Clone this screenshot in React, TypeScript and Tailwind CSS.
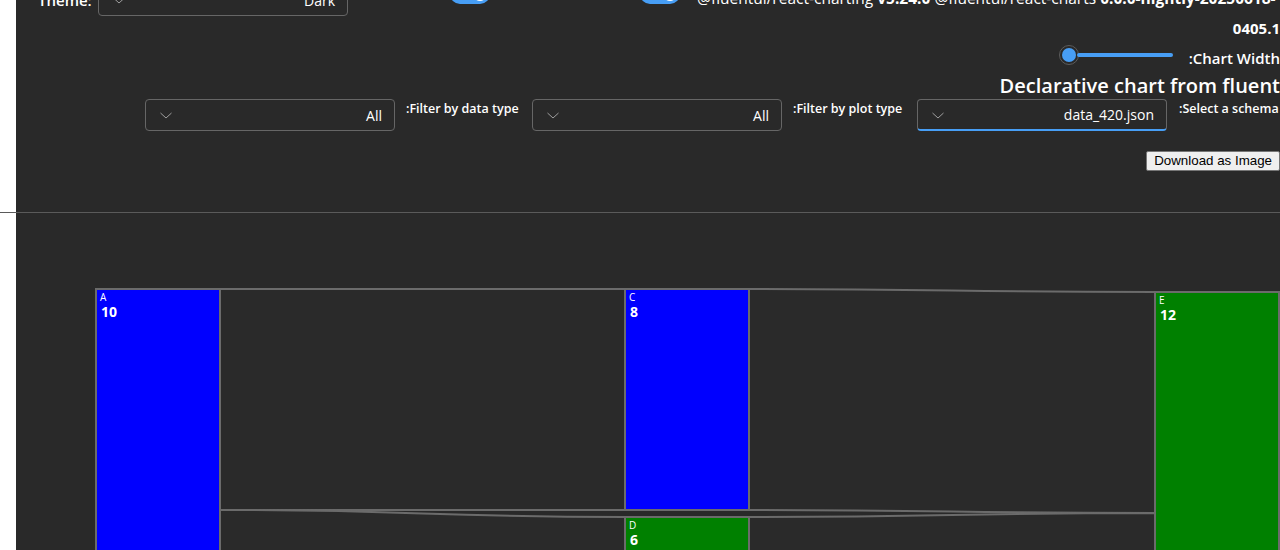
import React from "react";

const font = { fontFamily: '"Open Sans", "Noto Sans", sans-serif' };

function Chevron() {
  return (
    <svg width="14" height="14" viewBox="0 0 14 14" className="shrink-0">
      <path d="M1.5 5 L7 10 L12.5 5" fill="none" stroke="#9e9e9e" strokeWidth="1" />
    </svg>
  );
}

function Dropdown({ value, focused }: { value: string; focused?: boolean }) {
  return (
    <div
      className={
        "w-[250px] h-8 shrink-0 flex items-center justify-between rounded-[4px] border border-[#666666] bg-[#292929] pl-[13px] pr-[12px] " +
        (focused ? "border-b-2 border-b-[#479ef5]" : "")
      }
    >
      <Chevron />
      <span className="text-[14px] text-white">{value}</span>
    </div>
  );
}

function Switch() {
  return (
    <div className="w-10 h-5 rounded-full bg-[#479ef5] flex items-center justify-end pr-[3px] shrink-0">
      <div className="w-[14px] h-[14px] rounded-full bg-white" />
    </div>
  );
}

function linkPath(x0: number, t0: number, b0: number, x1: number, t1: number, b1: number) {
  const xm = (x0 + x1) / 2;
  return `M${x0},${t0} C${xm},${t0} ${xm},${t1} ${x1},${t1} L${x1},${b1} C${xm},${b1} ${xm},${b0} ${x0},${b0} Z`;
}

function Chart() {
  const nodes = [
    { x: 96, y: 289, h: 320, c: "#0000ff", l: "A", v: "10" },
    { x: 625, y: 289, h: 221, c: "#0000ff", l: "C", v: "8" },
    { x: 625, y: 517, h: 166, c: "#008000", l: "D", v: "6" },
    { x: 1155, y: 292, h: 331, c: "#008000", l: "E", v: "12" },
  ];
  const links = [
    linkPath(220, 289, 510, 625, 289, 510),
    linkPath(220, 510, 565, 625, 517, 572),
    linkPath(749, 289, 510, 1155, 292, 513),
    linkPath(749, 517, 627, 1155, 513, 623),
  ];
  return (
    <svg width="1264" height="337" className="block" style={font}>
      <g transform="translate(-16,-213)">
        {links.map((d, i) => (
          <path key={i} d={d} fill="#2a2a2a" stroke="#6b6b6b" strokeWidth="2" />
        ))}
        {nodes.map((n) => (
          <g key={n.l}>
            <rect x={n.x} y={n.y} width={124} height={n.h} fill={n.c} stroke="#6b6b6b" strokeWidth="2" />
            <text x={n.x + 4} y={n.y + 12} fontSize="10" fill="#ffffff">
              {n.l}
            </text>
            <text x={n.x + 5} y={n.y + 28} fontSize="14" fontWeight="700" fill="#ffffff">
              {n.v}
            </text>
          </g>
        ))}
      </g>
    </svg>
  );
}

export default function App() {
  return (
    <div className="w-[1280px] h-[550px] overflow-hidden bg-white flex flex-col text-white" style={font}>
      <div className="h-[212px] flex shrink-0">
        <div className="w-4 shrink-0 bg-white" />
        <div className="flex-1 bg-[#292929] flex flex-col min-w-0 overflow-hidden">
          {/* Row 1 */}
          <div className="-mt-4 h-8 flex items-center shrink-0">
            <span className="ml-[22px] w-[60px] shrink-0 text-[15px] font-semibold">Theme:</span>
            <Dropdown value="Dark" />
            <div className="ml-[102px] self-start">
              <Switch />
            </div>
            <div className="ml-[150px] self-start">
              <Switch />
            </div>
            <div className="ml-[17px] mt-[4px] self-start whitespace-nowrap text-[15.5px] font-semibold leading-[20px]">
              <span className="font-medium">@fluentui/react-charting</span> <span className="font-bold">v5.24.0</span>{" "}
              <span className="font-medium">@fluentui/react-charts</span>{" "}
              <span className="font-bold">0.0.0-nightly-20250618-</span>
            </div>
          </div>
          {/* Row 2 */}
          <div className="mt-[2px] h-5 text-right text-[15px] font-bold leading-[20px]">0405.1</div>
          {/* Row 3 slider */}
          <div className="mt-[9px] h-[22px] flex justify-end items-center">
            <div className="w-[114px] flex items-center -mt-[6px]">
              <div className="w-5 h-5 rounded-full border border-[#5c5c5c] bg-[#292929] flex items-center justify-center shrink-0">
                <div className="w-[14px] h-[14px] rounded-full bg-[#479ef5]" />
              </div>
              <div className="flex-1 h-1 rounded-full bg-[#479ef5] -ml-[2px]" />
            </div>
            <span className="ml-[16px] text-[15px] font-semibold whitespace-nowrap">:Chart Width</span>
          </div>
          {/* Row 4 heading */}
          <div className="mt-[5px] h-6 text-right text-[20px] font-semibold leading-[24px] whitespace-nowrap">
            Declarative chart from fluent
          </div>
          {/* Row 5 filters */}
          <div className="mt-[1px] flex items-start whitespace-nowrap">
            <div className="ml-[129px]">
              <Dropdown value="All" />
            </div>
            <span className="ml-[11px] mr-[11px] w-[115px] shrink-0 text-[12.5px] font-semibold leading-[20px]">
              :Filter by data type
            </span>
            <Dropdown value="All" />
            <span className="ml-[11px] mr-[11px] w-[113px] shrink-0 text-[12.5px] font-semibold leading-[20px]">
              :Filter by plot type
            </span>
            <Dropdown value="data_420.json" focused />
            <span className="ml-[12px] text-[12.5px] font-semibold leading-[20px]">:Select a schema</span>
          </div>
          {/* Row 6 button */}
          <div className="mt-[20px] flex justify-end">
            <button
              className="h-5 px-[7px] bg-[#efefef] border border-[#767676] rounded-[2px] text-[13.33px] text-black leading-none"
              style={{ fontFamily: '"Liberation Sans", Arial, sans-serif' }}
            >
              Download as Image
            </button>
          </div>
        </div>
      </div>
      <div className="h-px bg-[#5a5a5a] shrink-0" />
      <div className="flex-1 flex min-h-0">
        <div className="w-4 shrink-0 bg-white" />
        <div className="flex-1 bg-[#292929] overflow-hidden">
          <Chart />
        </div>
      </div>
    </div>
  );
}
